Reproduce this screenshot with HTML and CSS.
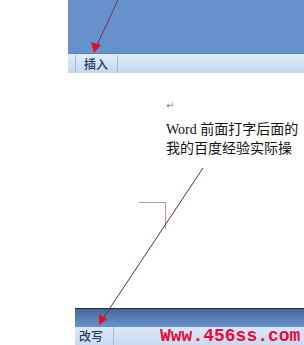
FILE: index.html
```html
<!DOCTYPE html>
<html>
<head>
<meta charset="utf-8">
<link rel="stylesheet" href="styles.css">
</head>
<body>
<div class="page">
  <div class="top">
    <div class="ribbon"></div>
    <div class="tabs">
      <span class="sep"></span>
      <span class="tab">插入</span>
      <span class="sep"></span>
    </div>
  </div>
  <div class="doc">
    <div class="para-mark">↵</div>
    <div class="text">
      <div class="line">Word 前面打字后面的</div>
      <div class="line">我的百度经验实际操</div>
    </div>
    <div class="corner"></div>
  </div>
  <div class="bottom">
    <div class="band"></div>
    <div class="status">
      <span class="tab2">改写</span>
      <span class="sep"></span>
      <span class="mark">Www.456ss.com</span>
    </div>
  </div>
  <svg class="arrows" width="304" height="345" viewBox="0 0 304 345">
    <line x1="118" y1="0" x2="97" y2="45" stroke="#7a2a55" stroke-width="1"/>
    <polygon points="94,53 91,42 101,45" fill="#e0102a"/>
    <line x1="203" y1="168" x2="104" y2="317" stroke="#6a2a3a" stroke-width="1"/>
    <polygon points="99,325 99,314 107,319" fill="#e0102a"/>
  </svg>
</div>
</body>
</html>
```
FILE: styles.css
```css
html, body {
  margin: 0;
  padding: 0;
  background: #fff;
}
.page {
  position: relative;
  width: 304px;
  height: 345px;
  overflow: hidden;
  display: flex;
  flex-direction: column;
}
.top {
  margin-left: 68px;
  display: flex;
  flex-direction: column;
}
.ribbon {
  height: 53px;
  background: #6791cb;
  border-bottom: 1px solid #5b80b6;
}
.tabs {
  height: 19px;
  background: linear-gradient(#e2ecf8, #c4d7ef);
  display: flex;
  align-items: center;
  padding-left: 7px;
}
.sep {
  width: 1px;
  height: 18px;
  background: #a7bcd6;
}
.tab {
  width: 41px;
  padding-left: 8px;
  box-sizing: border-box;
  font: 500 12px "Noto Sans CJK SC", sans-serif;
  color: #1d3a63;
  line-height: 19px;
}
.doc {
  flex: 1;
  display: flex;
  flex-direction: column;
  padding-left: 166px;
  position: relative;
}
.para-mark {
  margin-top: 26px;
  height: 14px;
  font: 10px "DejaVu Sans", sans-serif;
  color: #888;
  line-height: 14px;
}
.text {
  margin-top: 7px;
  white-space: nowrap;
  font: 14px "Liberation Serif", "Noto Sans CJK SC", serif;
  color: #111;
}
.line {
  height: 19px;
  line-height: 19px;
}
.corner {
  margin-left: -27px;
  margin-top: 44px;
  width: 26px;
  height: 26px;
  border-top: 1px solid #a0a0a0;
  border-right: 1px solid #a0a0a0;
}
.bottom {
  margin-left: 75px;
  display: flex;
  flex-direction: column;
}
.band {
  height: 18px;
  border-top: 1px solid #1e2d45;
  background: linear-gradient(#46679a, #6a93ca);
}
.status {
  height: 18px;
  background: linear-gradient(#dbe7f6, #c9dbf1);
  display: flex;
  align-items: center;
}
.tab2 {
  width: 38px;
  padding-left: 4px;
  box-sizing: border-box;
  font: 500 12px "Noto Sans CJK SC", sans-serif;
  color: #1d3a63;
  line-height: 18px;
}
.mark {
  margin-left: 46px;
  font: bold 18px "Liberation Mono", monospace;
  color: #ec0a3c;
  white-space: nowrap;
  line-height: 18px;
}
.arrows {
  position: absolute;
  left: 0;
  top: 0;
}
```
